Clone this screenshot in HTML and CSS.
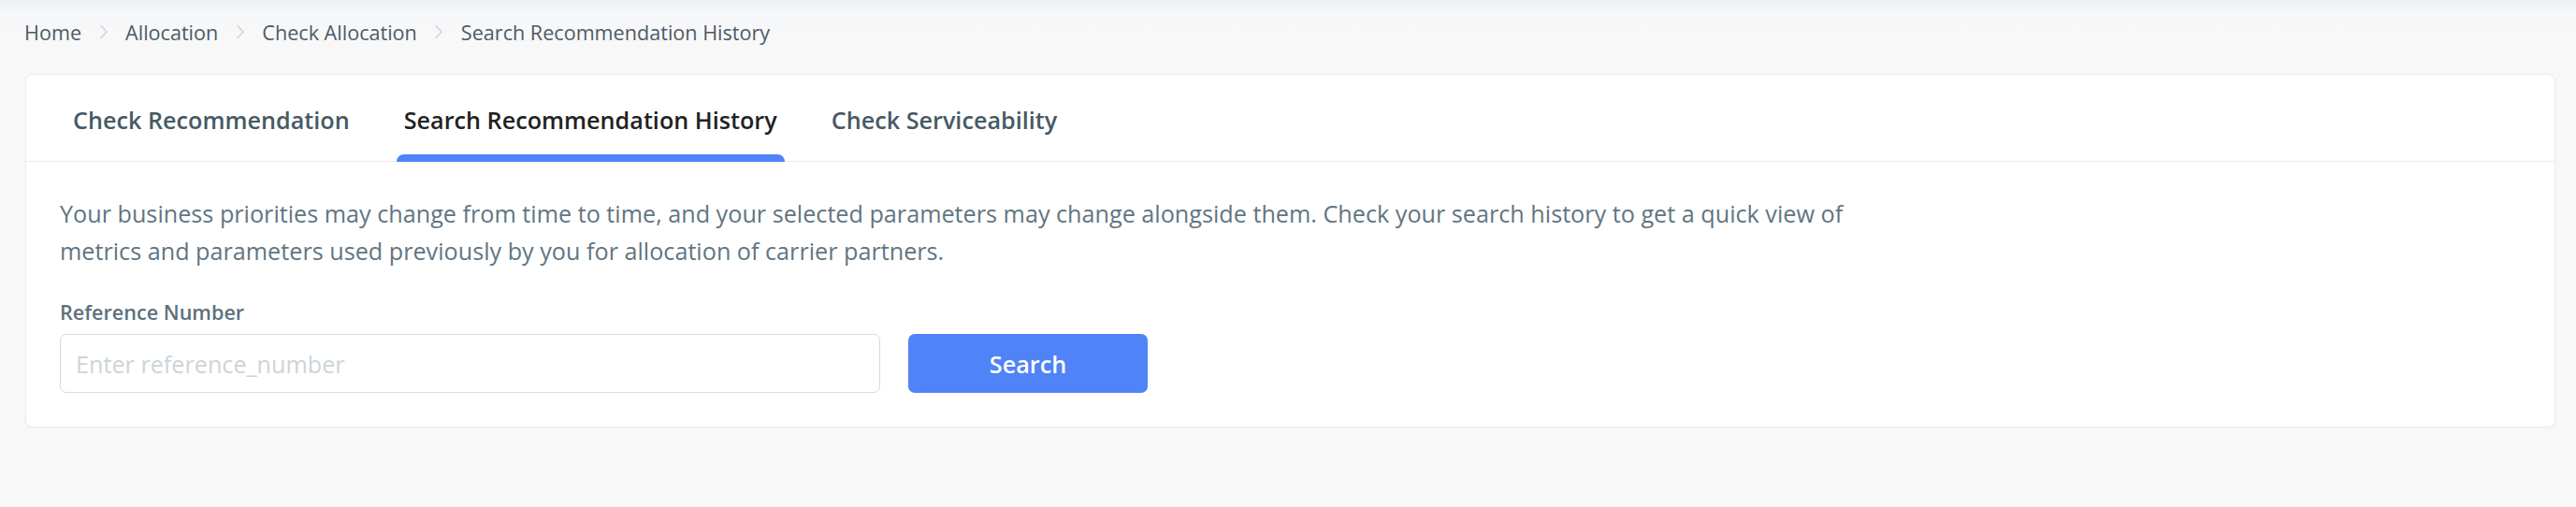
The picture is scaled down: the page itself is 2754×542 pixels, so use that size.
FILE: index.html
```html
<!DOCTYPE html>
<html lang="en">
<head>
<meta charset="utf-8">
<title>Search Recommendation History</title>
<link rel="stylesheet" href="styles.css">
</head>
<body>
<div class="page">
  <nav class="breadcrumb">
    <span class="crumb">Home</span>
    <svg class="sep" viewBox="0 0 10 16" width="10" height="16"><path d="M2 1.5 L8 8 L2 14.5" fill="none" stroke="#cfd5da" stroke-width="1.6" stroke-linecap="round" stroke-linejoin="round"/></svg>
    <span class="crumb">Allocation</span>
    <svg class="sep" viewBox="0 0 10 16" width="10" height="16"><path d="M2 1.5 L8 8 L2 14.5" fill="none" stroke="#cfd5da" stroke-width="1.6" stroke-linecap="round" stroke-linejoin="round"/></svg>
    <span class="crumb">Check Allocation</span>
    <svg class="sep" viewBox="0 0 10 16" width="10" height="16"><path d="M2 1.5 L8 8 L2 14.5" fill="none" stroke="#cfd5da" stroke-width="1.6" stroke-linecap="round" stroke-linejoin="round"/></svg>
    <span class="crumb">Search Recommendation History</span>
  </nav>
  <section class="card">
    <div class="tabs">
      <div class="tab">Check Recommendation</div>
      <div class="tab active">Search Recommendation History</div>
      <div class="tab">Check Serviceability</div>
    </div>
    <div class="card-body">
      <p class="desc">Your business priorities may change from time to time, and your selected parameters may change alongside them. Check your search history to get a quick view of metrics and parameters used previously by you for allocation of carrier partners.</p>
      <label class="label" for="ref">Reference Number</label>
      <div class="form-row">
        <input id="ref" class="input" type="text" placeholder="Enter reference_number">
        <button class="btn" type="button">Search</button>
      </div>
    </div>
  </section>
</div>
</body>
</html>
```

FILE: styles.css
```css
* { box-sizing: border-box; }
html, body { margin: 0; padding: 0; }
body {
  font-family: "Open Sans", "Noto Sans", sans-serif;
  background: #f8f8f8;
  width: 2754px;
  height: 542px;
  overflow: hidden;
}
.page {
  height: 542px;
  background: linear-gradient(to bottom, #edf0f7 0px, #f6f7fa 14px, #f8f8f8 40px);
  padding-top: 19px;
}
.breadcrumb {
  display: flex;
  align-items: center;
  gap: 18.5px;
  padding: 0 26px;
  height: 30px;
  font-size: 21.6px;
  color: #4c5b66;
}
.sep { display: block; }
.card {
  margin: 30px 22px 0 27px;
  background: #ffffff;
  border: 1px solid #ececf1;
  border-radius: 8px;
  box-shadow: 0 1px 3px rgba(0,0,0,0.03);
}
.tabs {
  display: flex;
  gap: 42px;
  padding: 0 42px;
  height: 93px;
  border-bottom: 1px solid #ebebf0;
}
.tab {
  position: relative;
  padding: 4px 8px 0;
  display: flex;
  align-items: center;
  font-size: 25.2px;
  font-weight: 600;
  color: #465a65;
}
.tab.active { color: #222222; }
.tab.active::after {
  content: "";
  position: absolute;
  left: 0;
  right: 0;
  bottom: -1px;
  height: 8px;
  background: #4f83f7;
  border-radius: 8px 8px 0 0;
}
.card-body {
  padding: 35px 36px 36px;
}
.desc {
  margin: 0;
  max-width: 1960px;
  font-size: 25.2px;
  line-height: 40px;
  color: #617582;
}
.label {
  display: block;
  margin-top: 32px;
  font-size: 21.6px;
  line-height: 28px;
  font-weight: 600;
  color: #5d707c;
}
.form-row {
  display: flex;
  gap: 30px;
  margin-top: 9px;
}
.input {
  width: 877px;
  height: 63px;
  border: 1px solid #d5dbdf;
  border-radius: 7px;
  padding: 0 16px;
  font-family: inherit;
  font-size: 25.2px;
  color: #333;
  outline: none;
}
.input::placeholder { color: #cdd4d9; }
.btn {
  width: 256px;
  height: 63px;
  border: 0;
  border-radius: 7px;
  background: #4f83f7;
  color: #ffffff;
  font-family: inherit;
  font-size: 25.2px;
  font-weight: 600;
}
```
